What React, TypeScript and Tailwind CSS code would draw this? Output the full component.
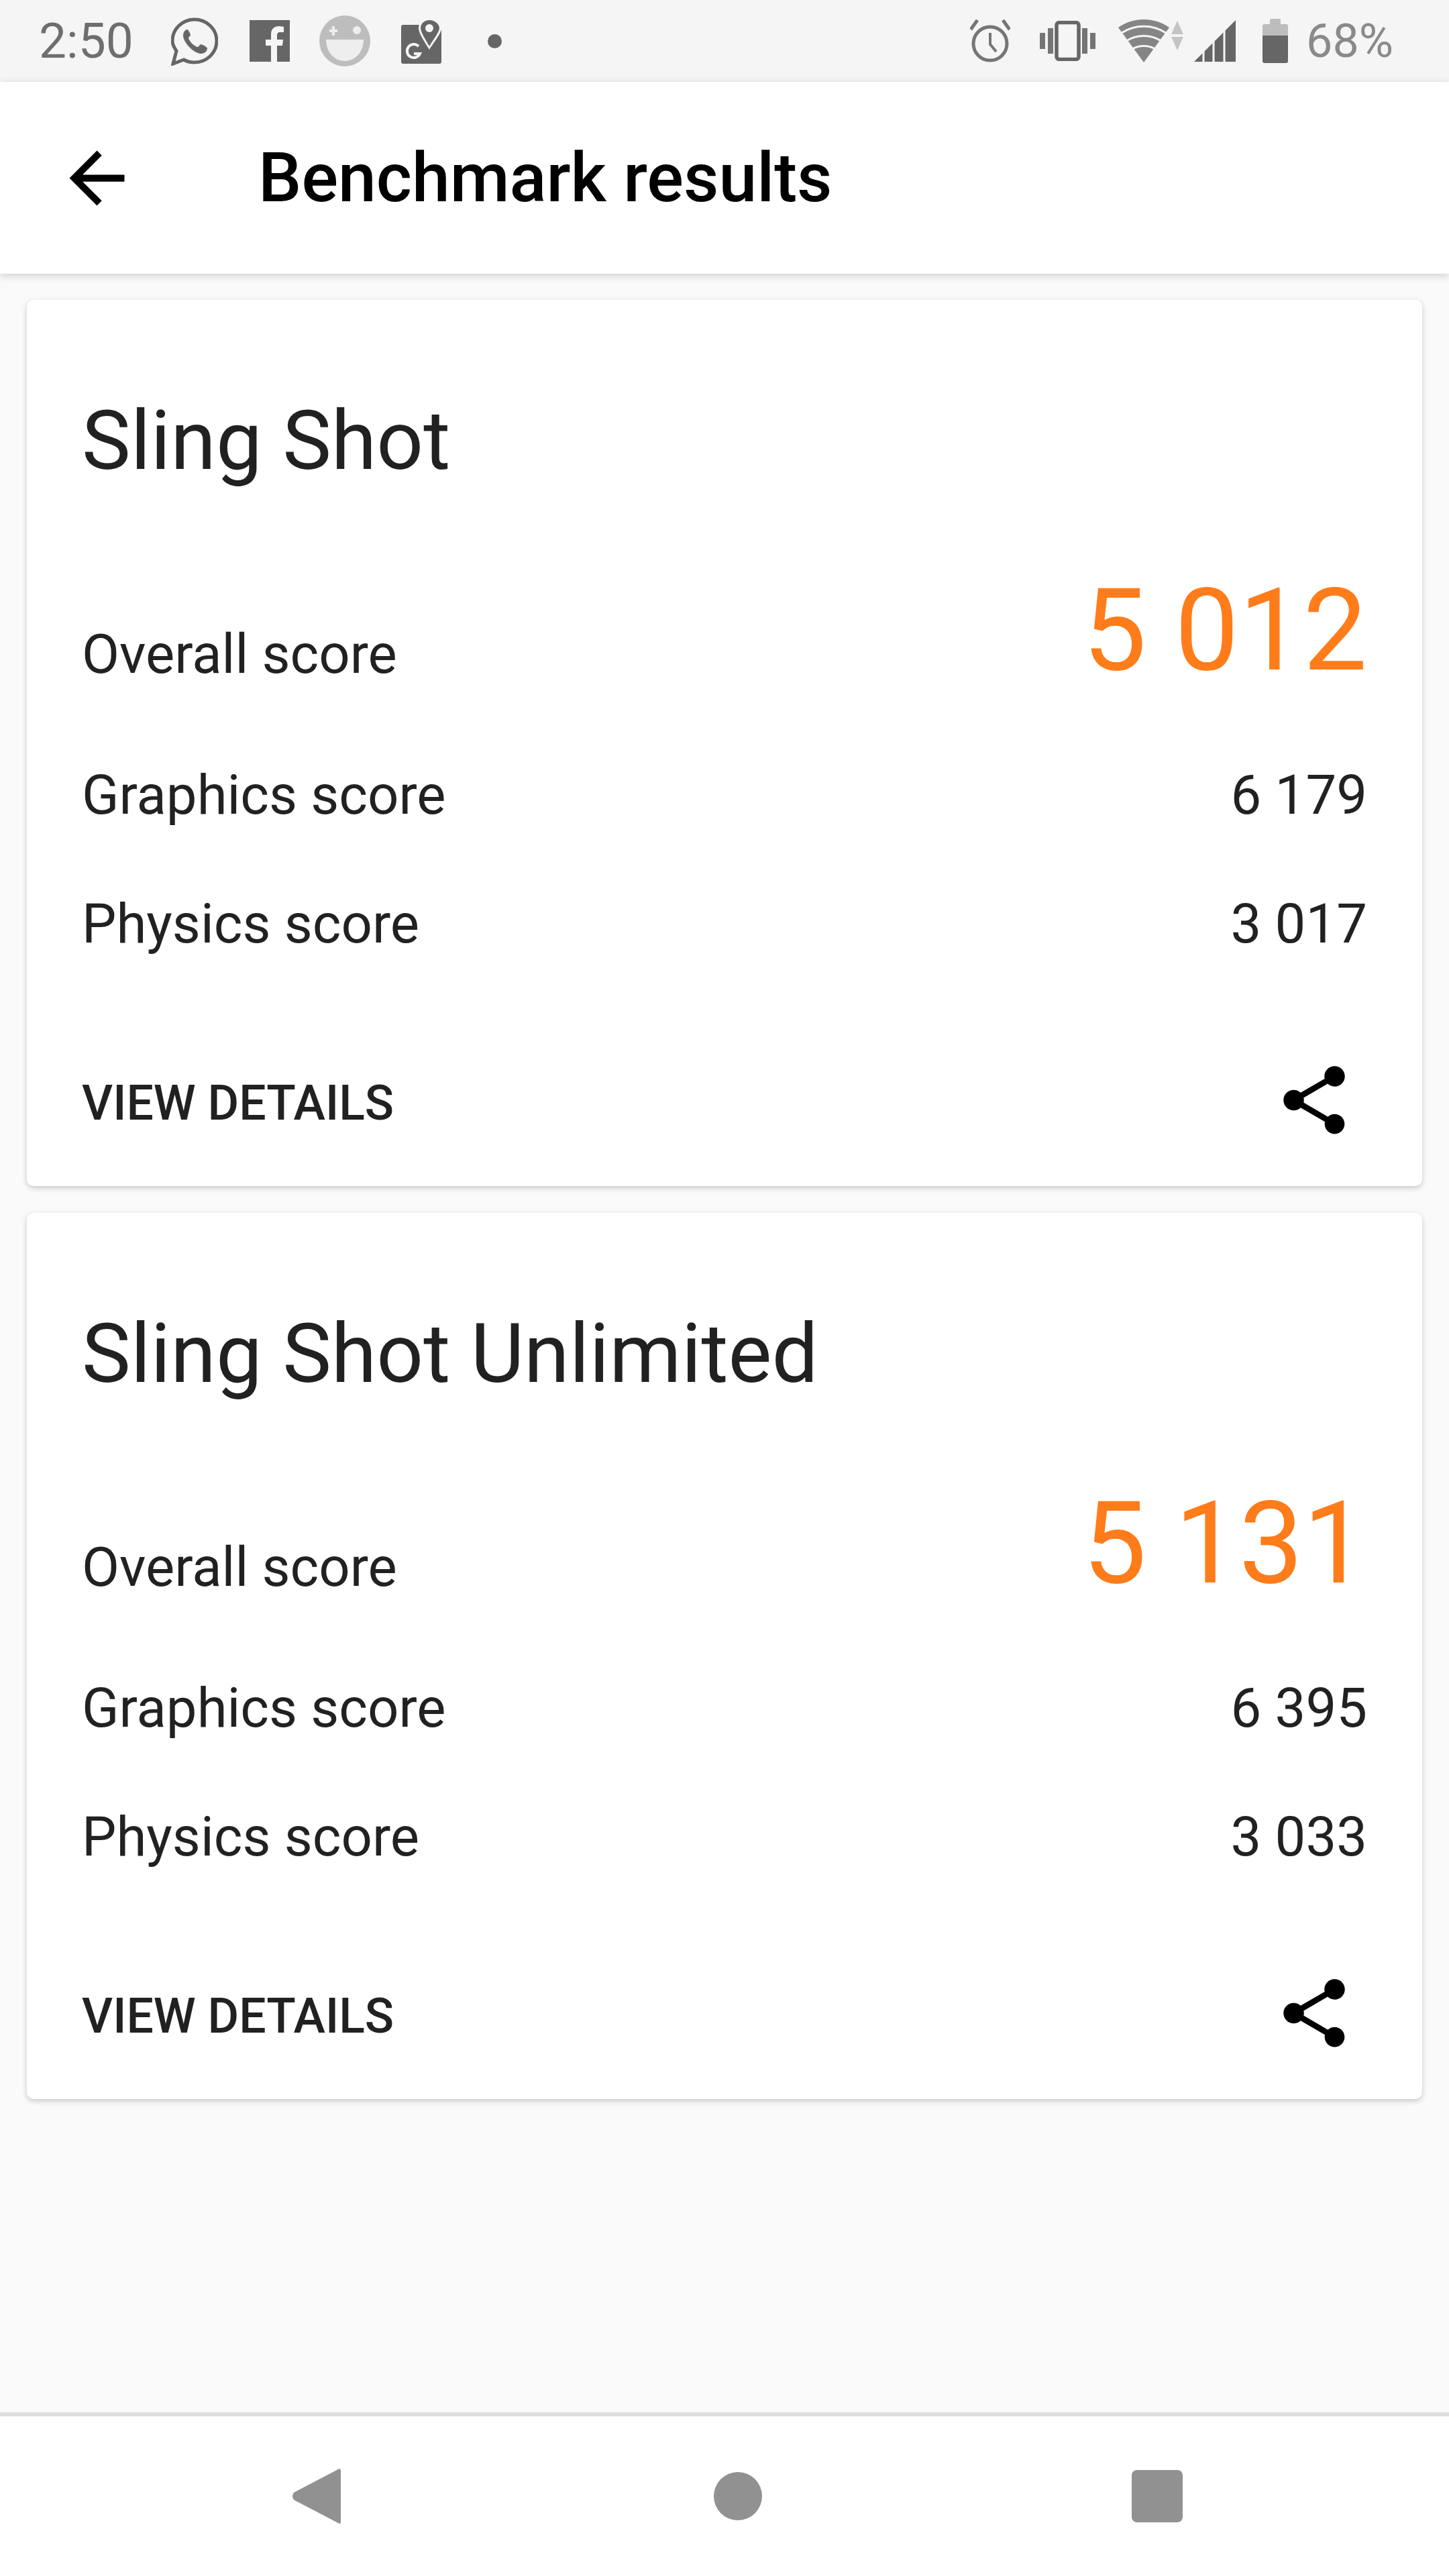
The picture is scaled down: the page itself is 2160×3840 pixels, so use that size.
const FONT = "font-['Roboto',sans-serif]";

function ArrowBack() {
  return (
    <svg viewBox="0 0 24 24" className="w-[123px] h-[123px] fill-black">
      <path d="M20 11H7.83l5.59-5.59L12 4l-8 8 8 8 1.41-1.41L7.83 13H20v-2z" />
    </svg>
  );
}

function ShareIcon() {
  return (
    <svg viewBox="0 0 24 24" className="w-[122px] h-[122px] fill-black">
      <path d="M18 16.08c-.76 0-1.44.3-1.96.77L8.91 12.7c.05-.23.09-.46.09-.7s-.04-.47-.09-.7l7.05-4.11c.54.5 1.25.81 2.04.81 1.66 0 3-1.34 3-3s-1.34-3-3-3-3 1.34-3 3c0 .24.04.47.09.7L8.04 9.81C7.5 9.31 6.79 9 6 9c-1.66 0-3 1.34-3 3s1.34 3 3 3c.79 0 1.5-.31 2.04-.81l7.12 4.16c-.05.21-.08.43-.08.65 0 1.61 1.31 2.92 2.92 2.92s2.92-1.31 2.92-2.92-1.31-2.92-2.92-2.92z" />
    </svg>
  );
}

function WhatsApp() {
  return (
    <svg viewBox="0 0 70 72" className="w-[70px] h-[72px] ml-[59px] mt-[2px]">
      <path d="M3 69l5-19C4 44 2 40 2 35 2 17 17 3 35 3s33 14 33 32-15 32-33 32c-6 0-11-1-16-4L3 69z" fill="none" stroke="#666" strokeWidth="5" />
      <path d="M24 18c-2 0-6 3-6 9 0 9 14 26 27 27 5 0 9-4 9-8 0-2-8-6-10-6-2 1-3 5-5 4-6-2-11-8-13-13 0-2 3-3 3-5 0-1-3-8-5-8z" fill="#666" />
    </svg>
  );
}

function Facebook() {
  return (
    <svg viewBox="0 0 60 62" className="w-[60px] h-[62px] ml-[47px]">
      <rect width="60" height="62" fill="#666" />
      <path d="M41 62V38h8l1-9h-9v-6c0-3 1-5 5-5h5V10c-1 0-4-1-7-1-7 0-12 4-12 12v8h-8v9h8v24z" fill="#f5f5f5" />
    </svg>
  );
}

function FaceIcon() {
  return (
    <svg viewBox="0 0 76 76" className="w-[76px] h-[76px] ml-[44px]">
      <circle cx="38" cy="38" r="38" fill="#bdbdbd" />
      <path d="M10 36h56c0 18-12 32-28 32S10 54 10 36z" fill="#eeeeee" />
      <path d="M15 21h4v-5h4v5h4v4h-4v5h-4v-5h-4z" fill="#eeeeee" />
      <circle cx="56" cy="22" r="6" fill="#eeeeee" />
    </svg>
  );
}

function MapsIcon() {
  return (
    <svg viewBox="0 0 60 68" className="w-[60px] h-[68px] ml-[46px]">
      <path d="M3 10h26l8 22 9-14h14v47a3 3 0 0 1-3 3H3a3 3 0 0 1-3-3V13a3 3 0 0 1 3-3z" fill="#666" />
      <path d="M42 0c-10 0-16 8-16 15 0 8 10 22 16 32 6-10 18-24 18-32C60 8 52 0 42 0z" fill="#f5f5f5" />
      <path d="M42 3c-8 0-13 6-13 12 0 6 8 18 13 27 5-9 15-21 15-27 0-6-7-12-15-12z" fill="#666" />
      <circle cx="42" cy="15" r="6" fill="#f5f5f5" />
      <path d="M26 42a10 10 0 1 0 2 11h-9" fill="none" stroke="#f5f5f5" strokeWidth="4" />
    </svg>
  );
}

function AlarmIcon() {
  return (
    <svg viewBox="0 0 60 64" className="w-[60px] h-[64px]">
      <circle cx="30" cy="36" r="25" fill="none" stroke="#757575" strokeWidth="5" />
      <path d="M30 20v17l9 11" fill="none" stroke="#757575" strokeWidth="4" />
      <path d="M1 15L11 1M59 15L49 1" fill="none" stroke="#757575" strokeWidth="5" />
    </svg>
  );
}

function VibrateIcon() {
  return (
    <svg viewBox="0 0 83 60" className="w-[83px] h-[60px] ml-[44px]">
      <rect x="25" y="2.5" width="33" height="55" rx="4" fill="none" stroke="#666" strokeWidth="5.5" />
      <rect x="0" y="18" width="8" height="24" fill="#757575" />
      <rect x="12" y="11" width="8" height="38" fill="#757575" />
      <rect x="63" y="11" width="8" height="38" fill="#757575" />
      <rect x="75" y="18" width="8" height="24" fill="#757575" />
    </svg>
  );
}

function WifiIcon() {
  return (
    <svg viewBox="0 0 98 64" className="w-[98px] h-[64px] ml-[34px]">
      <path d="M38 64L0 12C22-4 54-4 76 12z" fill="#858585" />
      <path d="M5 20c20-13 46-13 66 0M12 32c16-10 36-10 52 0M21 44c10-6 24-6 34 0" fill="none" stroke="#f5f5f5" strokeWidth="3" />
      <path d="M88 2l9 20H79zM88 46l9-20H79z" fill="#c4c4c4" />
    </svg>
  );
}

function SignalIcon() {
  return (
    <svg viewBox="0 0 62 62" className="w-[62px] h-[62px] ml-[15px]">
      <path d="M0 62L62 0v62z" fill="#666" />
      <path d="M14 42v20M29 26v36M45 10v52" stroke="#f5f5f5" strokeWidth="3" />
    </svg>
  );
}

function BatteryIcon() {
  return (
    <div className="flex flex-col items-center w-[38px] h-[66px] ml-[40px]">
      <div className="w-[16px] h-[8px] bg-[#bdbdbd] rounded-t-[2px]" />
      <div className="w-[38px] h-[17px] bg-[#bdbdbd] rounded-t-[3px]" />
      <div className="w-[38px] flex-1 bg-[#666666] rounded-b-[3px]" />
    </div>
  );
}

function StatusBar() {
  return (
    <div className={`h-[122px] bg-[#f5f5f5] flex items-center pl-[58px] pr-[83px] ${FONT}`}>
      <span className="text-[73px] leading-none text-[#6e6e6e] w-[138px]">2:50</span>
      <WhatsApp />
      <Facebook />
      <FaceIcon />
      <MapsIcon />
      <div className="w-[21px] h-[21px] rounded-full bg-[#666666] ml-[69px]" />
      <div className="flex items-center ml-auto">
        <AlarmIcon />
        <VibrateIcon />
        <WifiIcon />
        <SignalIcon />
        <BatteryIcon />
        <span className="text-[70px] leading-none text-[#8a8a8a] ml-[27px]">68%</span>
      </div>
    </div>
  );
}

function AppBar() {
  return (
    <div className="relative h-[286px] bg-white flex items-center pl-[83px] shadow-[0_3px_12px_rgba(0,0,0,0.18)]">
      <ArrowBack />
      <h1 className={`ml-[179px] text-[102px] leading-none font-medium text-black ${FONT}`}>Benchmark results</h1>
    </div>
  );
}

function ScoreRow({ label, value, className }: { label: string; value: string; className: string }) {
  return (
    <div className={`flex justify-between items-center text-[81.5px] leading-none text-[#212121] ${className}`}>
      <span>{label}</span>
      <span>{value}</span>
    </div>
  );
}

function ResultCard({ title, overall, graphics, physics }: { title: string; overall: string; graphics: string; physics: string }) {
  return (
    <div className={`h-[1321px] bg-white rounded-[10px] shadow-[0_3px_8px_rgba(0,0,0,0.2)] pl-[82px] pr-[82px] flex flex-col ${FONT}`}>
      <h2 className="mt-[150px] text-[122.5px] leading-[120px] text-[#212121]">{title}</h2>
      <div className="mt-[148px] flex justify-between items-end h-[160px]">
        <span className="text-[81.5px] leading-none text-[#212121] mb-[9px]">Overall score</span>
        <span className="text-[170px] leading-none text-[#ff7c1a]">{overall}</span>
      </div>
      <ScoreRow label="Graphics score" value={graphics} className="mt-[120px]" />
      <ScoreRow label="Physics score" value={physics} className="mt-[110px]" />
      <div className="mt-[161px] flex justify-between items-center">
        <span className="mt-[10px] text-[71.5px] leading-none font-medium text-[#212121]">VIEW DETAILS</span>
        <div className="mr-[18px]">
          <ShareIcon />
        </div>
      </div>
    </div>
  );
}

function NavBar() {
  return (
    <div className="h-[244px] bg-white border-t-[6px] border-[#dedede] flex items-center pl-[436px] gap-[556px]">
      <svg viewBox="0 0 72 84" className="w-[72px] h-[84px] fill-[#919191]">
        <path d="M70 1c1 0 2 2 2 4v74c0 3-1 5-2 4L3 48c-4-3-4-9 0-12z" />
      </svg>
      <div className="w-[72px] h-[72px] rounded-full bg-[#919191]" />
      <div className="w-[76px] h-[78px] rounded-[8px] bg-[#919191] -ml-[5px]" />
    </div>
  );
}

export default function App() {
  return (
    <div className="w-[2160px] h-[3840px] flex flex-col bg-[#fafafa]">
      <StatusBar />
      <AppBar />
      <div className="flex-1 flex flex-col gap-[40px] px-[40px] pt-[39px]">
        <ResultCard title="Sling Shot" overall="5 012" graphics="6 179" physics="3 017" />
        <ResultCard title="Sling Shot Unlimited" overall="5 131" graphics="6 395" physics="3 033" />
      </div>
      <NavBar />
    </div>
  );
}
